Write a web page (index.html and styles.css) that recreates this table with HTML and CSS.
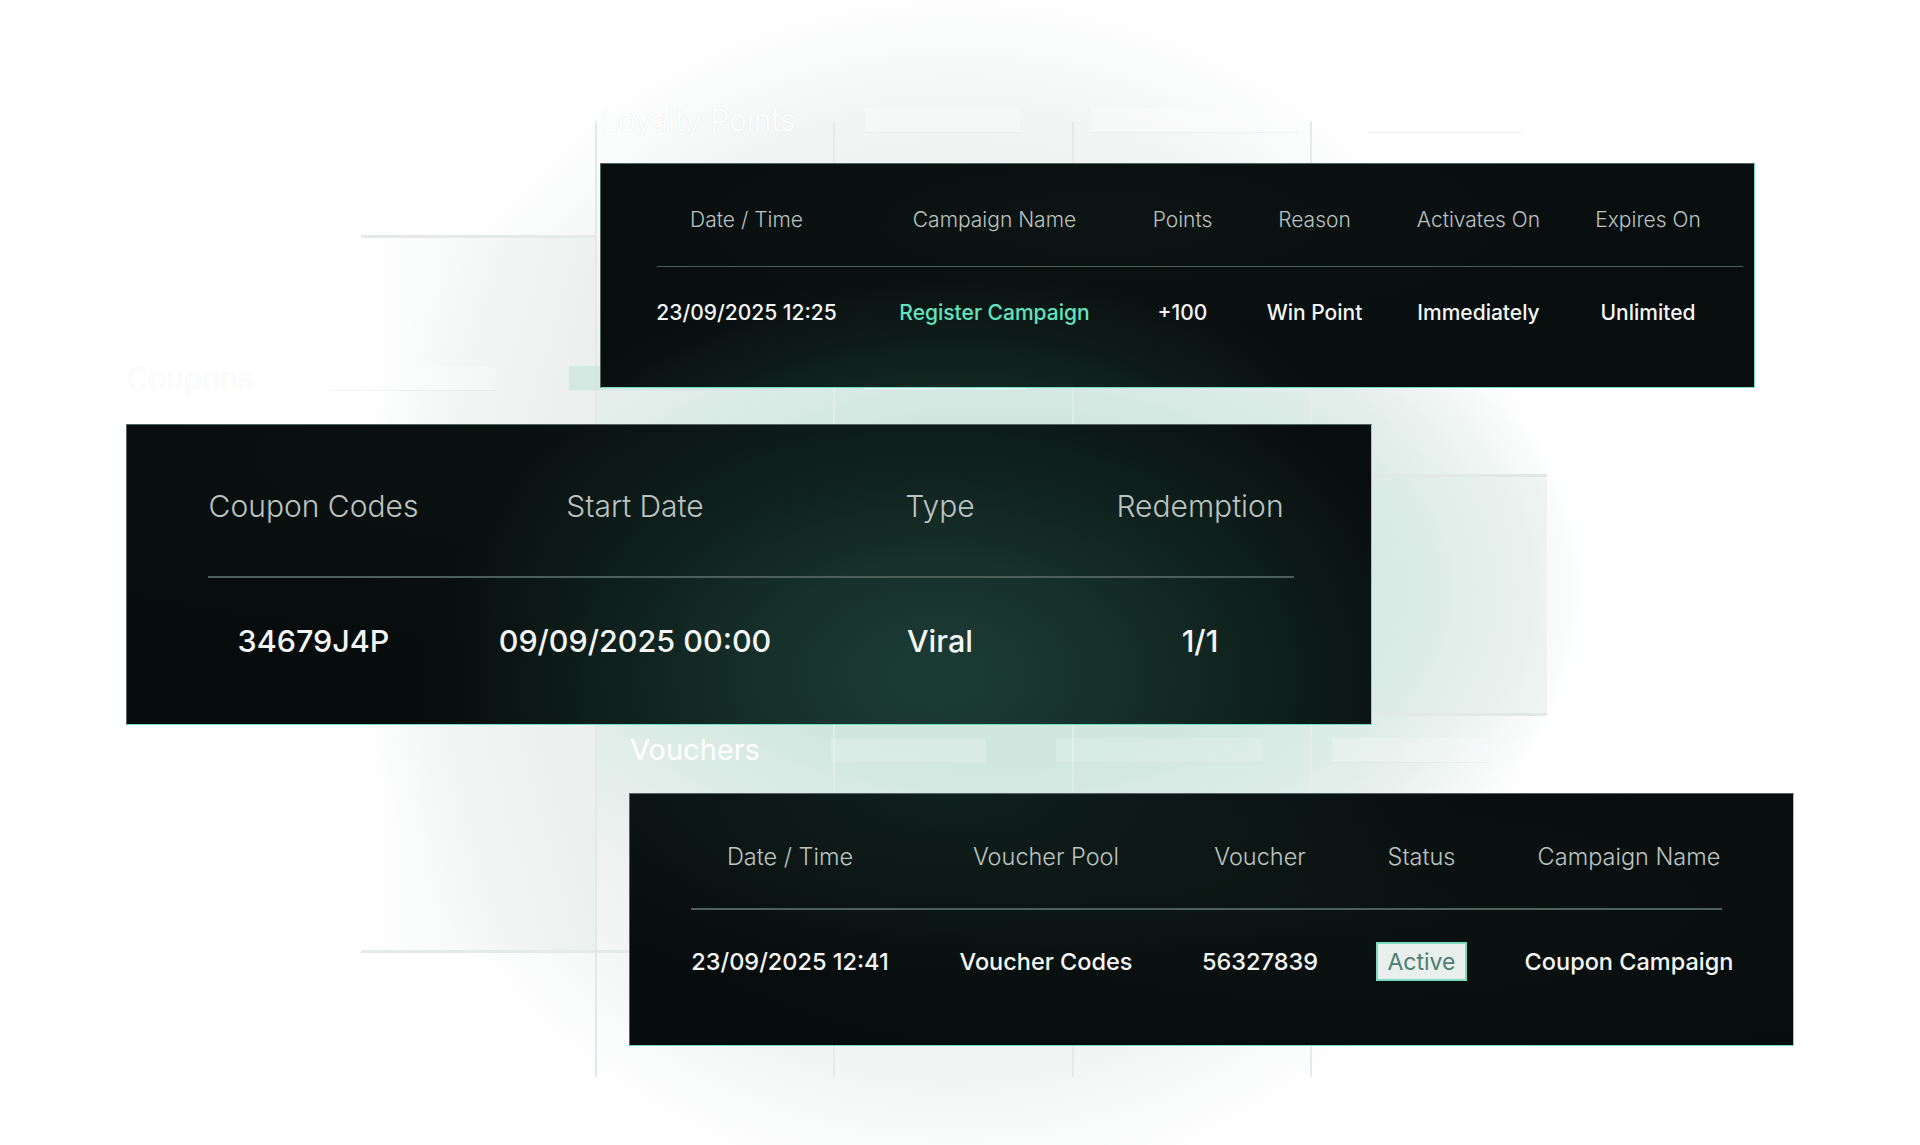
FILE: index.html
```html
<!DOCTYPE html>
<html lang="en">
<head>
<meta charset="utf-8">
<title>Loyalty, Coupons, Vouchers</title>
<link rel="stylesheet" href="styles.css">
</head>
<body>
<div class="stage">
  <section class="sec sec-loyalty">
    <div class="ghost">
      <span class="ghost-title">Loyalty Points</span>
      <span class="ph ph-1"></span>
      <span class="ph ph-2"></span>
      <span class="ph ph-3"></span>
    </div>
    <div class="card card-loyalty">
      <div class="tbl">
        <div class="row head">
          <div class="cell">Date / Time</div>
          <div class="cell">Campaign Name</div>
          <div class="cell">Points</div>
          <div class="cell">Reason</div>
          <div class="cell">Activates On</div>
          <div class="cell">Expires On</div>
        </div>
        <div class="row body">
          <div class="cell">23/09/2025 12:25</div>
          <div class="cell accent">Register Campaign</div>
          <div class="cell">+100</div>
          <div class="cell">Win Point</div>
          <div class="cell">Immediately</div>
          <div class="cell">Unlimited</div>
        </div>
      </div>
    </div>
  </section>

  <section class="sec sec-coupons">
    <div class="ghost">
      <span class="ghost-title">Coupons</span>
      <span class="ph ph-1"></span>
      <span class="ph ph-2"></span>
      <span class="ph ph-3"></span>
    </div>
    <div class="card card-coupons">
      <div class="tbl">
        <div class="row head">
          <div class="cell">Coupon Codes</div>
          <div class="cell">Start Date</div>
          <div class="cell">Type</div>
          <div class="cell">Redemption</div>
        </div>
        <div class="row body">
          <div class="cell">34679J4P</div>
          <div class="cell">09/09/2025 00:00</div>
          <div class="cell">Viral</div>
          <div class="cell">1/1</div>
        </div>
      </div>
    </div>
  </section>

  <section class="sec sec-vouchers">
    <div class="ghost">
      <span class="ghost-title">Vouchers</span>
      <span class="ph ph-1"></span>
      <span class="ph ph-2"></span>
      <span class="ph ph-3"></span>
    </div>
    <div class="card card-vouchers">
      <div class="tbl">
        <div class="row head">
          <div class="cell">Date / Time</div>
          <div class="cell">Voucher Pool</div>
          <div class="cell">Voucher</div>
          <div class="cell">Status</div>
          <div class="cell">Campaign Name</div>
        </div>
        <div class="row body">
          <div class="cell">23/09/2025 12:41</div>
          <div class="cell">Voucher Codes</div>
          <div class="cell">56327839</div>
          <div class="cell"><span class="badge">Active</span></div>
          <div class="cell">Coupon Campaign</div>
        </div>
      </div>
    </div>
  </section>
</div>
</body>
</html>
```
FILE: styles.css
```css
* { box-sizing: border-box; }

html, body {
  margin: 0;
  padding: 0;
  background: #ffffff;
}

body {
  font-family: Inter, "Noto Sans", "Liberation Sans", sans-serif;
}

.stage {
  width: 1920px;
  height: 1145px;
  overflow: hidden;
  padding-top: 102px;
  display: flex;
  flex-direction: column;
  align-items: flex-start;
  background:
    /* vertical guide lines */
    linear-gradient(#e2e9e7, #e2e9e7) 595px 121px / 2px 956px no-repeat,
    linear-gradient(#e4ebe9, #e4ebe9) 833px 121px / 2px 956px no-repeat,
    linear-gradient(#e4ebe9, #e4ebe9) 1072px 121px / 2px 956px no-repeat,
    linear-gradient(#e6ecea, #e6ecea) 1310px 121px / 2px 956px no-repeat,
    /* horizontal guide lines */
    linear-gradient(#e3eae8, #e3eae8) 361px 235px / 236px 3px no-repeat,
    linear-gradient(#e3eae8, #e3eae8) 361px 950px / 268px 3px no-repeat,
    linear-gradient(#e1e8e6, #e1e8e6) 1372px 474px / 175px 3px no-repeat,
    linear-gradient(#e1e8e6, #e1e8e6) 1372px 713px / 175px 3px no-repeat,
    /* mint glow behind the cards */
    radial-gradient(ellipse 600px 350px at 400px 590px, rgba(202, 229, 220, 1) 0%, rgba(207, 231, 223, 0.96) 50%, rgba(226, 237, 234, 0) 100%) 597px 0 / 1323px 1145px no-repeat,
    /* faint panel on the left */
    linear-gradient(to right, rgba(244, 246, 245, 0), rgba(235, 240, 238, 0.85)) 361px 236px / 236px 716px no-repeat,
    linear-gradient(rgba(236, 241, 239, 0.7), rgba(236, 241, 239, 0.7)) 1372px 476px / 175px 238px no-repeat,
    /* soft grey disc */
    radial-gradient(circle 610px at 956px 594px, #edf1f0 0%, #eff2f1 72%, rgba(255, 255, 255, 0) 100%),
    #ffffff;
}

/* ---------- sections ---------- */
.sec {
  display: flex;
  flex-direction: column;
  align-items: flex-start;
}
.sec-loyalty { margin-left: 600px; }
.sec-coupons { margin-left: 126px; margin-top: -28px; }
.sec-vouchers { margin-left: 629px; margin-top: 7px; }

/* ---------- ghost (background) title rows ---------- */
.ghost {
  display: flex;
  align-items: center;
  height: 36px;
}
.ghost-title {
  font-size: 30px;
  font-weight: 300;
  line-height: 36px;
  color: #ffffff;
  padding-left: 1px;
  text-shadow: 0 0 1px rgba(190, 206, 201, 0.55);
  white-space: nowrap;
}
.ph {
  display: block;
  height: 24px;
  background: rgba(255, 255, 255, 0.3);
  box-shadow: 0 1px 0 rgba(214, 224, 221, 0.35);
}

.sec-loyalty .ghost-title { width: 265px; }
.sec-loyalty .ph-1 { width: 155px; }
.sec-loyalty .ph-2 { width: 207px; margin-left: 71px; }
.sec-loyalty .ph-3 { width: 157px; margin-left: 69px; }

.sec-coupons .ghost-title { width: 204px; }
.sec-coupons .ph-1 { width: 165px; }
.sec-coupons .ph-2 { width: 216px; margin-left: 74px; background: rgba(208, 232, 224, 0.9); }
.sec-coupons .ph-3 { width: 162px; margin-left: 79px; }

.sec-vouchers .ghost-title { width: 202px; text-shadow: none; font-weight: 400; font-size: 29px; }
.sec-vouchers .ph-1 { width: 155px; background: rgba(255, 255, 255, 0.18); }
.sec-vouchers .ph-2 { width: 206px; margin-left: 70px; background: rgba(255, 255, 255, 0.16); }
.sec-vouchers .ph-3 { width: 156px; margin-left: 70px; background: rgba(255, 255, 255, 0.22); }

/* ---------- cards ---------- */
.card {
  position: relative;
  z-index: 1;
  border: 1px solid;
  border-color: #56655f #6fdfc2 #6fdfc2 #56655f;
  color: #f3f5f4;
}

.card-loyalty {
  width: 1155px;
  margin-top: 25px;
  padding: 44px 0 62px 56px;
  background:
    radial-gradient(ellipse 430px 190px at 350px 300px, #1c3a34 0%, #122721 40%, rgba(8, 13, 13, 0) 100%),
    radial-gradient(ellipse 600px 160px at 500px 60px, #0c1513 0%, rgba(8, 13, 13, 0) 100%),
    #080d0d;
}

.card-coupons {
  width: 1246px;
  margin-top: 28px;
  padding: 63px 0 65px 81px;
  background:
    radial-gradient(ellipse 520px 340px at 810px 250px, #1d3c36 0%, #17322c 30%, #0f211d 62%, rgba(7, 12, 12, 0) 100%),
    radial-gradient(ellipse 900px 200px at 600px 30px, #0b1412 0%, rgba(7, 12, 12, 0) 100%),
    #070c0c;
}

.card-vouchers {
  width: 1165px;
  margin-top: 25px;
  padding: 50px 0 64px 61px;
  background:
    radial-gradient(ellipse 520px 190px at 320px 0px, #10201c 0%, rgba(7, 12, 12, 0) 100%),
    radial-gradient(ellipse 700px 180px at 700px 110px, #0b1412 0%, rgba(7, 12, 12, 0) 100%),
    #070c0c;
}

/* ---------- tables ---------- */
.row {
  display: grid;
}
.cell {
  display: flex;
  justify-content: center;
  align-items: center;
  white-space: nowrap;
}
.head {
  color: #bcc4c1;
  font-weight: 300;
}
.body {
  color: #f4f6f5;
  font-weight: 500;
}
.accent { color: #62e4c1; }

/* loyalty */
.card-loyalty .tbl { width: 1086px; }
.card-loyalty .row {
  grid-template-columns: 179px 293px 59px 181px 123px 192px;
  column-gap: 12px;
  font-size: 21px;
  line-height: 24px;
}
.card-loyalty .head {
  padding-bottom: 34px;
  border-bottom: 1px solid #4c5f59;
}
.card-loyalty .body { margin-top: 34px; }

/* coupons */
.card-coupons .tbl { width: 1086px; }
.card-coupons .row {
  grid-template-columns: 211px 278px 178px 188px;
  column-gap: 77px;
  font-size: 30px;
  line-height: 36px;
}
.card-coupons .head {
  padding-bottom: 52px;
  border-bottom: 2px solid #4c5f59;
}
.card-coupons .body {
  margin-top: 45px;
  font-size: 30.5px;
}

/* vouchers */
.card-vouchers .tbl { width: 1031px; }
.card-vouchers .row {
  grid-template-columns: 198px 254px 114px 149px 206px;
  column-gap: 30px;
  font-size: 23.5px;
  line-height: 26px;
}
.card-vouchers .head {
  padding-bottom: 38px;
  border-bottom: 2px solid #4c5f59;
}
.card-vouchers .body {
  margin-top: 32px;
  height: 39px;
}

.badge {
  display: flex;
  align-items: center;
  justify-content: center;
  width: 91px;
  height: 39px;
  border: 2px solid #7bdcc2;
  background: #e9efed;
  color: #4e7d71;
  font-weight: 400;
  font-size: 23px;
}
```
